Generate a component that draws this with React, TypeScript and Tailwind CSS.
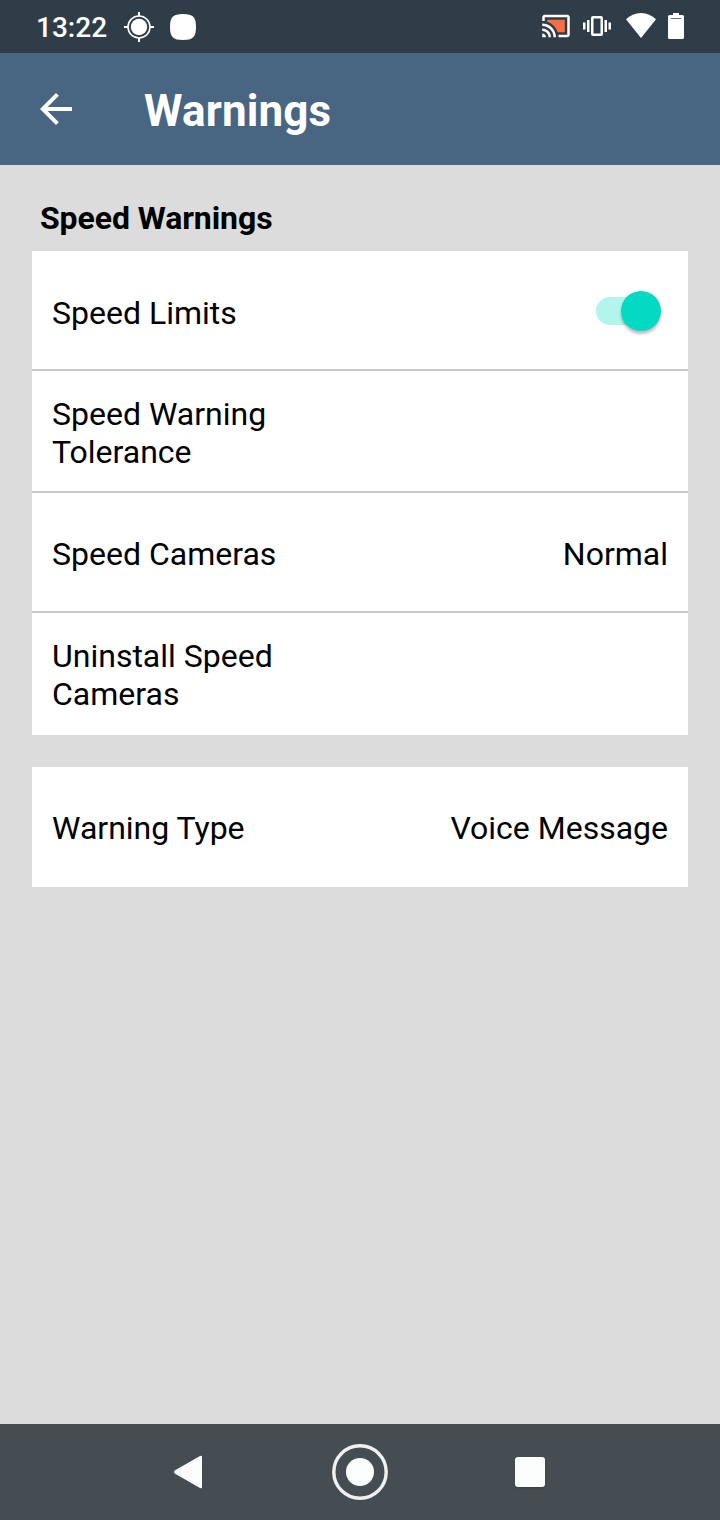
import React from "react";

function StatusBar() {
  return (
    <header className="flex h-[53px] shrink-0 items-start bg-[#2f3d48] text-white">
      <div className="w-[88px] shrink-0 pl-9 pt-[11px] text-[28px] leading-[34px] font-medium">13:22</div>
      <svg className="ml-9 mt-3 h-[30px] w-[30px] shrink-0" viewBox="0 0 30 30" fill="none" stroke="white">
        <circle cx="15" cy="15" r="8.2" fill="white" stroke="none" />
        <circle cx="15" cy="15" r="11" strokeWidth="1.6" />
        <path d="M15 0v4M15 26v4M0 15h4M26 15h4" strokeWidth="2" />
      </svg>
      <svg className="ml-4 mt-[14px] h-[26px] w-[26px] shrink-0" viewBox="0 0 26 26" fill="white">
        <path d="M13 0C23 0 26 3 26 13S23 26 13 26 0 23 0 13 3 0 13 0Z" />
      </svg>
      <svg className="ml-[345px] mt-[11px] h-[30px] w-[30px] shrink-0" viewBox="0 0 24 24" fill="white">
        <path fill="#ff6e40" d="M5 7v1.63C8.96 9.91 12.09 13.04 13.37 17H19V7z" />
        <path d="M1 18v3h3c0-1.66-1.34-3-3-3zm0-4v2c2.76 0 5 2.24 5 5h2c0-3.87-3.13-7-7-7zm0-4v2c4.97 0 9 4.03 9 9h2c0-6.08-4.93-11-11-11zM21 3H3c-1.1 0-2 .9-2 2v3h2V5h18v14h-7v2h7c1.1 0 2-.9 2-2V5c0-1.1-.9-2-2-2z" />
      </svg>
      <svg className="ml-3 mt-3 h-7 w-7 shrink-0" viewBox="0 0 28 28" fill="white">
        <path d="M0 10.500h2.500v7H0zM4 8h2.500v12H4zM21.500 8H24v12h-2.500zM25.500 10.500H28v7h-2.500z" />
        <rect x="9.250" y="5.250" width="9.500" height="17.500" rx="0.800" fill="none" stroke="white" strokeWidth="2.500" />
      </svg>
      <svg className="ml-[15px] mt-[13px] h-[25px] w-[30px] shrink-0" viewBox="0 0 30 25" fill="white">
        <path d="M15 25 0 6.300C4 2.300 9.200 0 15 0s11 2.300 15 6.300Z" />
      </svg>
      <svg className="ml-3 mt-[13px] h-[26px] w-4 shrink-0" viewBox="0 0 16 26">
        <path fill="white" d="M5 0h6v2h3.500Q16 2 16 3.500v21Q16 26 14.500 26h-13Q0 26 0 24.500v-21Q0 2 1.500 2H5Z" />
        <path fill="#69737b" d="M3 5h10v1H3z" />
      </svg>
    </header>
  );
}

function Toggle() {
  return (
    <div role="switch" aria-checked="true" className="relative mr-[7px] mb-1 flex h-10 w-[65px] items-center">
      <div className="h-7 w-14 rounded-full bg-[#b3f4ec]" />
      <div className="absolute right-0 top-0 h-10 w-10 rounded-full bg-[#04d9c3] shadow-[0_3px_3px_rgba(0,0,0,0.25)]" />
    </div>
  );
}

function Row({ label, className, children }: { label: string; className: string; children?: React.ReactNode }) {
  return (
    <div className={`flex items-center justify-between px-5 ${className}`}>
      <div className="w-[250px]">{label}</div>
      {children}
    </div>
  );
}

export default function App() {
  return (
    <div className="flex h-[1520px] w-[720px] flex-col overflow-hidden bg-[#dcdcdc] font-[Roboto,sans-serif]">
      <StatusBar />
      <div className="flex h-28 shrink-0 items-center bg-[#486581] pl-8 text-white">
        <svg className="h-12 w-12" viewBox="0 0 24 24" fill="white">
          <path d="M20 11H7.830l5.590-5.590L12 4l-8 8 8 8 1.410-1.410L7.830 13H20v-2z" />
        </svg>
        <h1 className="ml-16 pt-1 text-[44px] leading-[52px] font-bold tracking-[0.15px]">Warnings</h1>
      </div>
      <main className="flex grow flex-col px-8 text-[32px] leading-[38px] text-black">
        <h2 className="h-[86px] pl-2 pt-[34px] font-bold tracking-[-0.08px]">Speed Warnings</h2>
        <section className="bg-white">
          <Row label="Speed Limits" className="h-[120px] border-b-2 border-[#c8c8c8] pt-[6px]">
            <Toggle />
          </Row>
          <Row label="Speed Warning Tolerance" className="h-[122px] border-b-2 border-[#c8c8c8] pt-1" />
          <Row label="Speed Cameras" className="h-[120px] border-b-2 border-[#c8c8c8] pt-1">
            <div>Normal</div>
          </Row>
          <Row label="Uninstall Speed Cameras" className="h-[122px] pt-[2px]" />
        </section>
        <section className="mt-8 bg-white">
          <Row label="Warning Type" className="h-[120px] pt-[2px]">
            <div>Voice Message</div>
          </Row>
        </section>
      </main>
      <nav className="flex h-24 shrink-0 items-center bg-[#454d52]">
        <svg className="ml-[173px] h-[34px] w-[30px]" viewBox="0 0 30 34" fill="#fcfefe">
          <path d="M1.700 15.600 27 1Q29 0 29 2v30q0 2-2 1L1.700 18.400Q0 17 1.700 15.600Z" />
        </svg>
        <svg className="ml-[129px] h-14 w-14" viewBox="0 0 56 56">
          <circle cx="28" cy="28" r="26.200" fill="none" stroke="#f0f0f2" strokeWidth="3.400" />
          <circle cx="28" cy="28" r="14" fill="#fcfefe" />
        </svg>
        <div className="ml-[127px] h-[30px] w-[30px] rounded-[3px] bg-[#fcfefe] shadow-[0_1px_2px_rgba(0,0,0,0.2)]" />
      </nav>
    </div>
  );
}
